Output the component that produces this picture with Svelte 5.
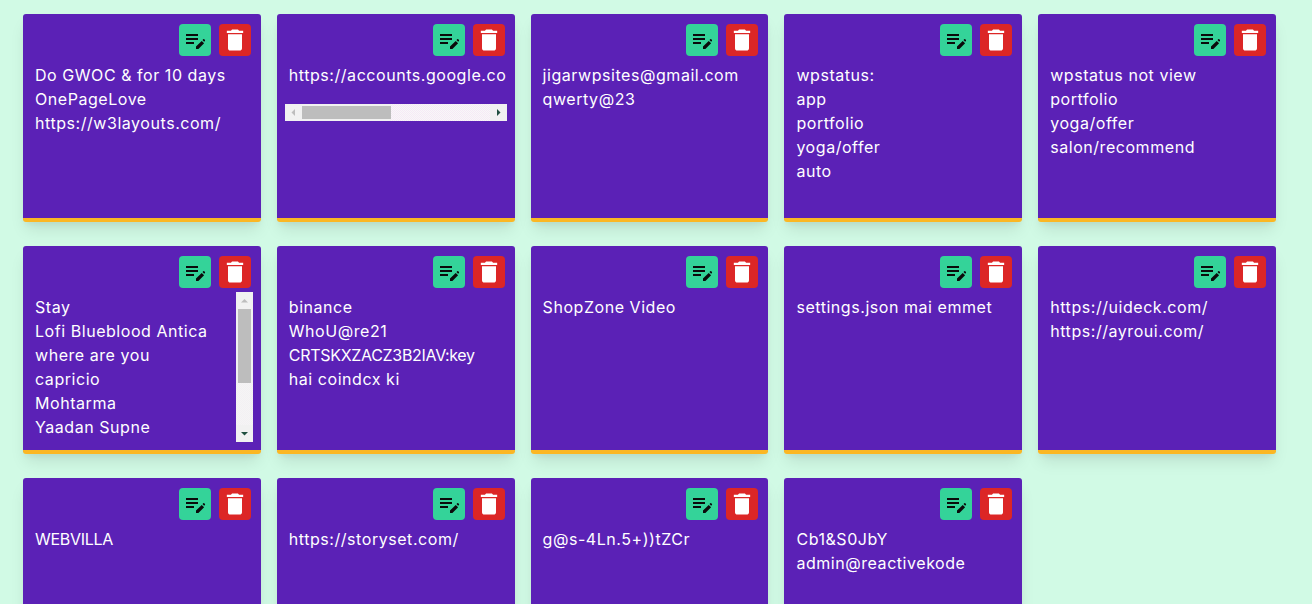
<script>
  const notes = [
    { lines: ['Do GWOC & for 10 days', 'OnePageLove', 'https://w3layouts.com/'] },
    { lines: ['https://accounts.google.co'], hbar: true },
    { lines: ['jigarwpsites@gmail.com', 'qwerty@23'] },
    { lines: ['wpstatus:', 'app', 'portfolio', 'yoga/offer', 'auto'] },
    { lines: ['wpstatus not view', 'portfolio', 'yoga/offer', 'salon/recommend'] },
    { lines: ['Stay', 'Lofi Blueblood Antica', 'where are you', 'capricio', 'Mohtarma', 'Yaadan Supne'], vbar: true },
    { lines: ['binance', 'WhoU@re21', 'CRTSKXZACZ3B2IAV:key', 'hai coindcx ki'] },
    { lines: ['ShopZone Video'] },
    { lines: ['settings.json mai emmet'] },
    { lines: ['https://uideck.com/', 'https://ayroui.com/'] },
    { lines: ['WEBVILLA'] },
    { lines: ['https://storyset.com/'] },
    { lines: ['g@s-4Ln.5+))tZCr'] },
    { lines: ['Cb1&S0JbY', 'admin@reactivekode'] }
  ];
  const isCaps = (s) => /[A-Z]{6}/.test(s);
</script>

<main class="grid">
  {#each notes as note}
    <article class="card">
      <div class="actions">
        <button class="btn edit" aria-label="Edit">
          <svg viewBox="0 0 24 24" width="24" height="24"><path d="M3 6h12v2H3zM3 10h12v2H3zM3 14h8v2H3zM13 21v-2.400l5.700-5.700 2.400 2.400L15.400 21zM19.500 12.100l.8-.8c.3-.3.7-.3 1 0l.6.6c.3.3.3.7 0 1l-.8.8z" fill="#0b0b0b"/></svg>
        </button>
        <button class="btn del" aria-label="Delete">
          <svg viewBox="0 0 24 24" width="28" height="28"><path d="M6 19c0 1.100.9 2 2 2h8c1.100 0 2-.9 2-2V7H6v12zM19 4h-3.500l-1-1h-5l-1 1H5v2h14V4z" fill="#fff"/></svg>
        </button>
      </div>
      <div class="body" class:scrolly={note.vbar}>
        <div class="text">
          {#each note.lines as line}
            <div class="line" class:caps={isCaps(line)}>{line}</div>
          {/each}
        </div>
        {#if note.vbar}
          <div class="vbar">
            <svg class="arrow" viewBox="0 0 17 17" width="17" height="17"><path d="M5 10.500h7L8.500 7z" fill="#bdbdbd"/></svg>
            <div class="vthumb"></div>
            <div class="vtrack"></div>
            <svg class="arrow" viewBox="0 0 17 17" width="17" height="17"><path d="M5 7h7l-3.500 3.500z" fill="#1f4f3f"/></svg>
          </div>
        {/if}
      </div>
      {#if note.hbar}
        <div class="hbar">
          <svg class="arrow" viewBox="0 0 17 17" width="17" height="17"><path d="M10 5v7L6.500 8.500z" fill="#bdbdbd"/></svg>
          <div class="hthumb"></div>
          <div class="htrack"></div>
          <svg class="arrow" viewBox="0 0 17 17" width="17" height="17"><path d="M7 5v7l3.500-3.500z" fill="#1f4f3f"/></svg>
        </div>
      {/if}
    </article>
  {/each}
</main>

<style>
  :global(body) {
    margin: 0;
    background: #d1fae5;
    height: 604px;
    overflow: hidden;
  }
  .grid {
    display: grid;
    grid-template-columns: repeat(5, minmax(0, 1fr));
    gap: 24px 16px;
    padding: 14px 36px 0 23px;
    font-family: Inter, "Open Sans", sans-serif;
    font-size: 16px;
    font-weight: 400;
    line-height: 24px;
    color: #fff;
  }
  .card {
    box-sizing: border-box;
    height: 208px;
    background: #5b21b6;
    border-bottom: 4px solid #fbb724;
    border-radius: 3px;
    box-shadow: 0 10px 15px -3px rgba(0, 0, 0, 0.1), 0 4px 6px -2px rgba(0, 0, 0, 0.05);
    padding-top: 10px;
    overflow: hidden;
  }
  .actions {
    display: flex;
    justify-content: flex-end;
    gap: 8px;
    padding-right: 10px;
  }
  .btn {
    width: 32px;
    height: 32px;
    border: 0;
    border-radius: 4px;
    padding: 0;
    display: flex;
    align-items: center;
    justify-content: center;
  }
  .edit { background: #34d399; }
  .del { background: #dc2626; }
  .body {
    position: relative;
    margin: 4px 8px 0;
    padding: 3px 4px 5px;
    overflow: hidden;
    letter-spacing: 0.55px;
  }
  .scrolly {
    height: 150px;
    box-sizing: border-box;
    padding-right: 21px;
  }
  .line { white-space: nowrap; }
  .caps { letter-spacing: -0.3px; }
  .vbar, .hbar {
    display: flex;
    background: #f1f1f1;
  }
  .vbar {
    position: absolute;
    top: 0;
    right: 0;
    bottom: 0;
    width: 17px;
    flex-direction: column;
  }
  .hbar {
    height: 17px;
    margin: 12px 8px 0;
  }
  .arrow { flex: none; display: block; }
  .vthumb {
    height: 74px;
    margin: 0 2px;
    background: #bdbdbd;
    flex: none;
  }
  .hthumb {
    width: 89px;
    margin: 2px 0;
    background: #bdbdbd;
    flex: none;
  }
  .vtrack {
    flex: 1;
    background: repeating-conic-gradient(#f3f0f3 0 25%, #f5f5f5 0 50%) 0 0 / 2px 2px;
  }
  .htrack {
    flex: 1;
    background: repeating-conic-gradient(#f6e8f6 0 25%, #f8f8f8 0 50%) 0 0 / 2px 2px;
  }
</style>
